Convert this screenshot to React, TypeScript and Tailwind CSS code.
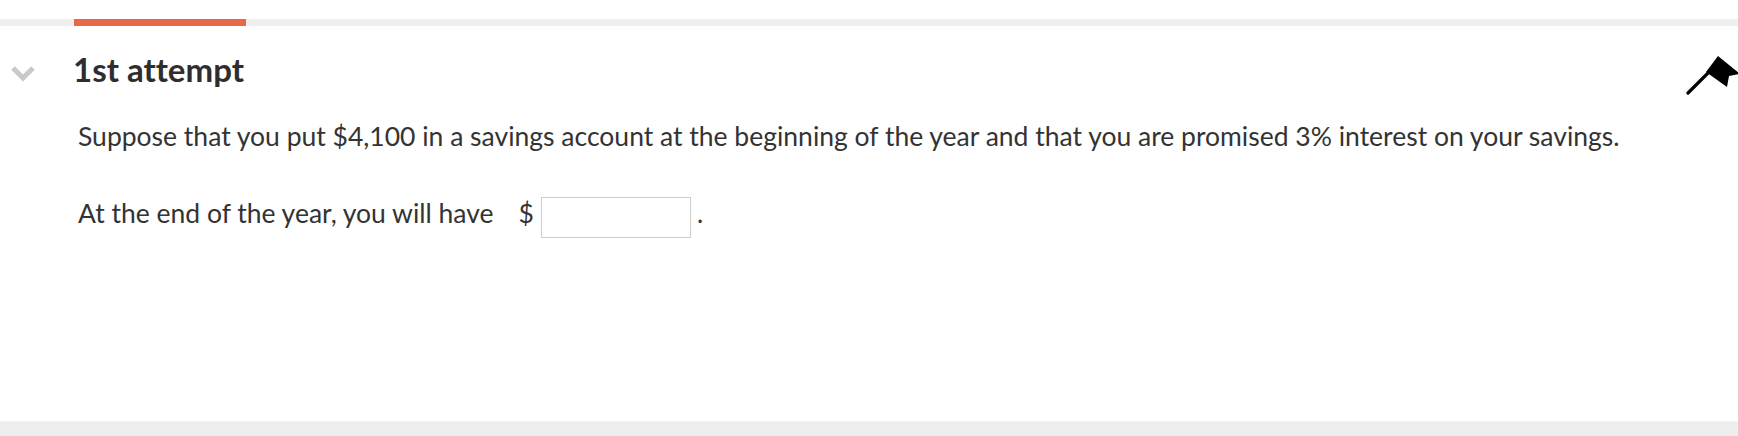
import React from "react";

const ChevronDown = () => (
  <svg width="26" height="17" viewBox="0 0 26 17" fill="none">
    <path d="M3 3l10 10 10-10" stroke="#c9c9c9" strokeWidth="5" strokeLinejoin="miter" />
  </svg>
);

const FlagIcon = () => (
  <svg width="54" height="42" viewBox="0 0 54 42" fill="none">
    <path d="M2 38 L23 17" stroke="#000" strokeWidth="3.2" strokeLinecap="round" />
    <path d="M20 17 L32 1 L54 19 L43 21 L41 32 Z" fill="#000" />
  </svg>
);

const App: React.FC = () => {
  return (
    <div
      className="relative w-[1738px] h-[436px] bg-white overflow-hidden text-[#333333] [font-variant-ligatures:none]"
      style={{ fontFamily: "Lato, 'Open Sans', sans-serif" }}
    >
      {/* PROGRESS */}
      <div className="pt-[19px]">
        <div className="h-[7px] bg-[#efefef]">
          <div className="ml-[74px] w-[172px] h-full bg-[#e8684a]" />
        </div>
      </div>

      {/* HEADER */}
      <div className="flex items-center h-[64px] mt-[11px]">
        <div className="w-[73px] flex pl-[10px] pt-[9px]">
          <ChevronDown />
        </div>
        <h2 className="text-[33px] font-bold leading-none text-[#2e2e2e]">1st attempt</h2>
      </div>
      <div className="absolute top-[55px] right-[-2px]">
        <FlagIcon />
      </div>

      {/* QUESTION */}
      <div className="pl-[78px] pt-[19px] text-[26.5px] leading-[32px]">
        <p>
          Suppose that you put $4,100 in a savings account at the beginning of the year and that you are
          promised 3% interest on your savings.
        </p>
        <div className="flex items-start mt-[45px]">
          <span>At the end of the year, you will have</span>
          <span className="ml-[25px]">$</span>
          <input
            type="text"
            className="ml-[7px] w-[150px] h-[41px] border border-[#cccccc] bg-white outline-none"
          />
          <span className="ml-[6px]">.</span>
        </div>
      </div>

      {/* FOOTER */}
      <div className="absolute left-0 right-0 bottom-0 h-[15px] bg-[#eeeeee] border-t border-[#f3f3f3]" />
    </div>
  );
};

export default App;
